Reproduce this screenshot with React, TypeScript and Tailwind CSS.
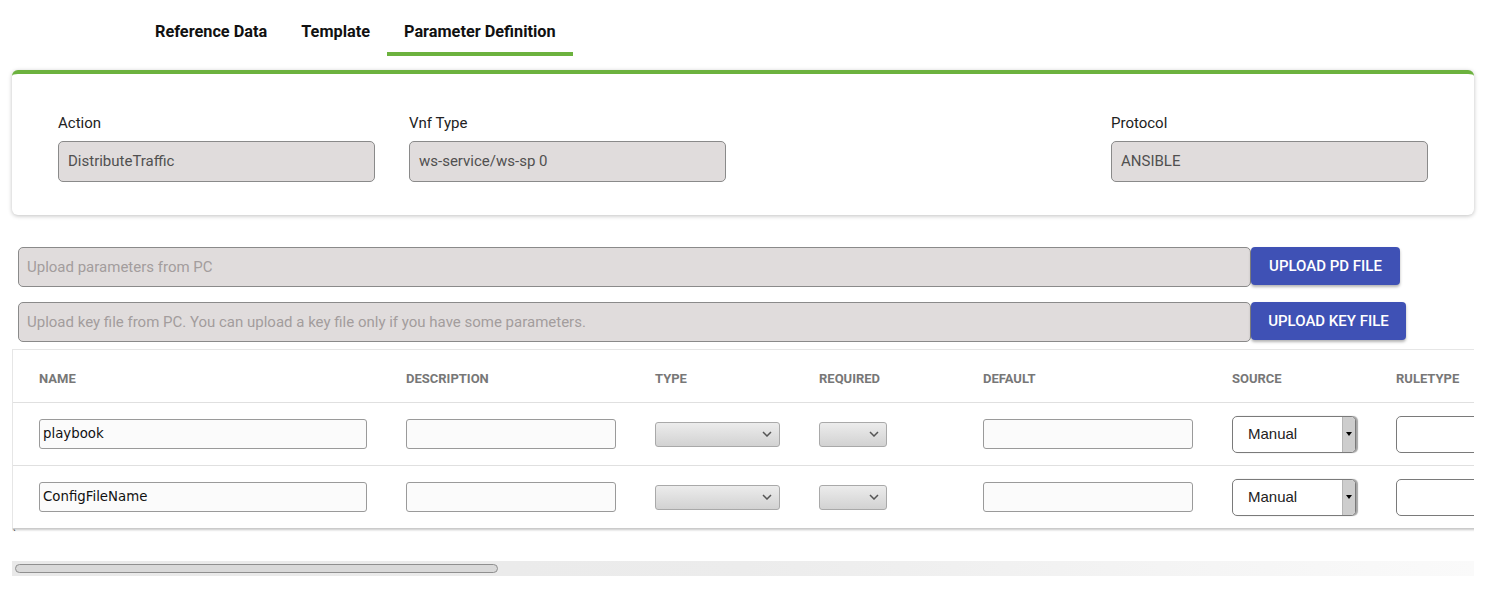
import React from "react";

const tabs = ["Reference Data", "Template", "Parameter Definition"];

function Field({ label, value }: { label: string; value: string }) {
  return (
    <div className="w-[317px]">
      <div className="text-[15px] leading-[18px] text-[#222] mb-[9px]">{label}</div>
      <div className="h-[41px] flex items-center px-[9px] rounded-[5px] border border-[#8a8a8a] bg-[#e0dcdc] text-[15px] text-[#505050]">
        {value}
      </div>
    </div>
  );
}

function UploadRow({ placeholder, button, btnWidth }: { placeholder: string; button: string; btnWidth: string }) {
  return (
    <div className="flex items-start">
      <div className="w-[1233px] h-[40px] flex items-center px-[8px] rounded-[5px] border border-[#8a8a8a] bg-[#e0dcdc] text-[15px] text-[#a39d9d]">
        {placeholder}
      </div>
      <button
        className={`${btnWidth} h-[38px] rounded-[4px] bg-[#3f51b5] text-white text-[15px] font-medium uppercase shadow-[0_2px_3px_rgba(0,0,0,0.3)]`}
      >
        {button}
      </button>
    </div>
  );
}

function Chevron() {
  return (
    <svg width="10" height="6" viewBox="0 0 10 6" className="absolute right-[7px] top-1/2 -translate-y-1/2">
      <polyline points="1,1 5,5 9,1" fill="none" stroke="#555" strokeWidth="1.5" />
    </svg>
  );
}

function GraySelect({ width }: { width: string }) {
  return (
    <div className={`${width} relative h-[25px] rounded-[3px] border border-[#a9a9a9] bg-gradient-to-b from-[#ececec] to-[#d2d2d2]`}>
      <Chevron />
    </div>
  );
}

function TextBox({ width, value }: { width: string; value?: string }) {
  return (
    <div className={`${width} h-[30px] flex items-center px-[3px] rounded-[3px] border border-[#9a9a9a] bg-[#fbfbfb] font-['DejaVu_Sans',sans-serif] text-[13.33px] text-[#111]`}>
      {value}
    </div>
  );
}

function SourceSelect() {
  return (
    <div className="w-[124px] h-[37px] flex rounded-[5px] border border-[#7a7a7a] bg-white overflow-hidden shadow-[2px_0_1px_rgba(0,0,0,0.35)]">
      <div className="flex-1 flex items-center pl-[15px] font-['Liberation_Sans',sans-serif] text-[15px] text-[#222]">Manual</div>
      <div className="w-[13px] bg-[#cdcdcd] flex items-center justify-center border-l border-[#b5b5b5]">
        <div className="w-0 h-0 border-l-[3px] border-r-[3px] border-t-[4px] border-l-transparent border-r-transparent border-t-black" />
      </div>
    </div>
  );
}

function Row({ name }: { name: string }) {
  return (
    <div className="flex items-center h-[63px] border-t border-[#e0e0e0]">
      <div className="w-[393px] shrink-0 pl-[26px]"><TextBox width="w-[328px]" value={name} /></div>
      <div className="w-[249px] shrink-0"><TextBox width="w-[210px]" /></div>
      <div className="w-[164px] shrink-0"><GraySelect width="w-[125px]" /></div>
      <div className="w-[164px] shrink-0"><GraySelect width="w-[68px]" /></div>
      <div className="w-[249px] shrink-0"><TextBox width="w-[210px]" /></div>
      <div className="w-[164px] shrink-0"><SourceSelect /></div>
      <div className="w-[164px] shrink-0">
        <div className="w-[124px] h-[37px] rounded-[5px] border border-[#7a7a7a] bg-white" />
      </div>
    </div>
  );
}

const headers: [string, string][] = [
  ["NAME", "w-[393px] pl-[26px]"],
  ["DESCRIPTION", "w-[249px]"],
  ["TYPE", "w-[164px]"],
  ["REQUIRED", "w-[164px]"],
  ["DEFAULT", "w-[249px]"],
  ["SOURCE", "w-[164px]"],
  ["RULETYPE", "w-[164px]"],
];

export default function App() {
  return (
    <div className="w-[1495px] h-[600px] overflow-hidden bg-white font-['Roboto',sans-serif]">
      {/* tabs */}
      <div className="flex pl-[138px] h-[56px]">
        {tabs.map((t, i) => (
          <div
            key={t}
            className={`px-[17px] pt-[20px] text-[16.3px] font-bold text-[#111] border-b-4 ${i === 2 ? "border-[#6cb23e]" : "border-transparent"}`}
          >
            {t}
          </div>
        ))}
      </div>

      {/* header card */}
      <div className="mt-[14px] ml-[12px] w-[1462px] h-[145px] rounded-[6px] border-t-4 border-[#6cb23e] bg-white shadow-[0_1px_4px_rgba(0,0,0,0.25)] pl-[46px] pt-[40px] flex">
        <div className="w-[351px]"><Field label="Action" value="DistributeTraffic" /></div>
        <div className="w-[351px]"><Field label="Vnf Type" value="ws-service/ws-sp 0" /></div>
        <div className="w-[351px]" />
        <div className="w-[351px]"><Field label="Protocol" value="ANSIBLE" /></div>
      </div>

      {/* upload rows */}
      <div className="mt-[32px] ml-[18px] flex flex-col gap-[15px]">
        <UploadRow placeholder="Upload parameters from PC" button="Upload PD File" btnWidth="w-[149px]" />
        <UploadRow
          placeholder="Upload key file from PC. You can upload a key file only if you have some parameters."
          button="Upload Key File"
          btnWidth="w-[155px]"
        />
      </div>

      {/* parameter table */}
      <div className="mt-[7px] ml-[12px] w-[1462px] overflow-hidden">
        <div className="w-max bg-white border-t border-l border-[#e6e6e6] shadow-[0_2px_2px_rgba(0,0,0,0.22)]">
          <div className="flex items-center h-[52px] pt-[6px]">
            {headers.map(([h, w]) => (
              <div key={h} className={`${w} shrink-0 text-[13px] font-bold text-[#777]`}>{h}</div>
            ))}
          </div>
          <Row name="playbook" />
          <Row name="ConfigFileName" />
        </div>
        <div className="h-[18px] pl-[1px] text-[10px] leading-[14px] text-[#333]">`</div>
        <div className="mt-[15px] h-[15px] bg-gradient-to-r from-[#e9e9e9] via-[#ececec] to-[#fafafa] flex items-center pl-[3px]">
          <div className="w-[483px] h-[9px] rounded-full border border-[#8f8f8f] bg-[#d9d9d9]" />
        </div>
      </div>
    </div>
  );
}
